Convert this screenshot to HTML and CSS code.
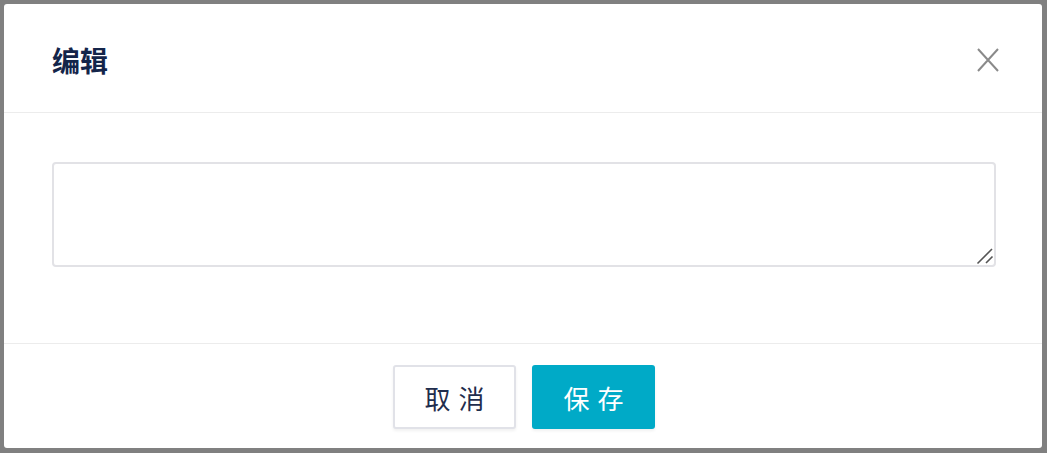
FILE: index.html
```html
<!DOCTYPE html>
<html lang="zh">
<head>
<meta charset="utf-8">
<link rel="stylesheet" href="styles.css">
</head>
<body>
<div class="overlay">
  <div class="modal">
    <div class="modal-header">
      <h2 class="modal-title">编辑</h2>
      <button class="close-btn" aria-label="关闭">
        <svg width="22" height="24" viewBox="0 0 22 24"><path d="M1 1 L21 23 M21 1 L1 23" stroke="#8a8a8a" stroke-width="2" fill="none"/></svg>
      </button>
    </div>
    <div class="modal-body">
      <div class="field-wrap">
        <textarea class="field"></textarea>
        <svg class="grip" width="18" height="18" viewBox="0 0 18 18"><path d="M1.5 16.5 L16 2 M10 16 L16.5 9.5" stroke="#555" stroke-width="1.6" fill="none"/></svg>
      </div>
    </div>
    <div class="modal-footer">
      <button class="btn btn-cancel">取消</button>
      <button class="btn btn-save">保存</button>
    </div>
  </div>
</div>
</body>
</html>
```
FILE: styles.css
```css
html, body {
  margin: 0;
  padding: 0;
  height: 100%;
}
body {
  background: #808080;
  font-family: "Noto Sans CJK SC", "Noto Sans", sans-serif;
}
.overlay {
  box-sizing: border-box;
  height: 100%;
  padding: 4px 5px 5px 4px;
  display: flex;
}
.modal {
  flex: 1;
  background: #fff;
  border-radius: 3px;
  display: flex;
  flex-direction: column;
}
.modal-header {
  height: 108px;
  border-bottom: 1px solid #ececec;
  display: flex;
  align-items: center;
  justify-content: space-between;
  padding: 0 43px 0 48px;
}
.modal-title {
  margin: 0;
  font-size: 28px;
  font-weight: 700;
  color: #14254a;
  line-height: 1;
  padding-top: 3px;
}
.close-btn {
  border: 0;
  background: none;
  padding: 0;
  width: 22px;
  height: 24px;
  display: flex;
  cursor: pointer;
  margin-top: 4px;
}
.modal-body {
  height: 231px;
  box-sizing: border-box;
  padding: 49px 46px 0 48px;
  border-bottom: 1px solid #ececec;
}
.field-wrap {
  position: relative;
}
.field {
  display: block;
  box-sizing: border-box;
  width: 100%;
  height: 105px;
  border: 2px solid #e2e2e6;
  border-radius: 4px;
  resize: none;
  outline: none;
  font-family: inherit;
}
.grip {
  position: absolute;
  right: 2px;
  bottom: 2px;
  pointer-events: none;
}
.modal-footer {
  flex: 1;
  display: flex;
  justify-content: center;
  align-items: flex-start;
  gap: 16px;
  padding: 21px 0 0 2px;
}
.btn {
  box-sizing: border-box;
  width: 123px;
  height: 64px;
  border-radius: 3px;
  font-family: "Noto Sans CJK SC", sans-serif;
  font-size: 26px;
  letter-spacing: 8px;
  padding: 0 0 0 8px;
  display: flex;
  align-items: center;
  justify-content: center;
  box-shadow: 0 2px 3px rgba(0, 0, 0, 0.06);
}
.btn-cancel {
  background: #fff;
  border: 2px solid #e1e2e8;
  color: #1f2d4d;
}
.btn-save {
  background: #00aac7;
  border: 0;
  color: #fff;
}
```
